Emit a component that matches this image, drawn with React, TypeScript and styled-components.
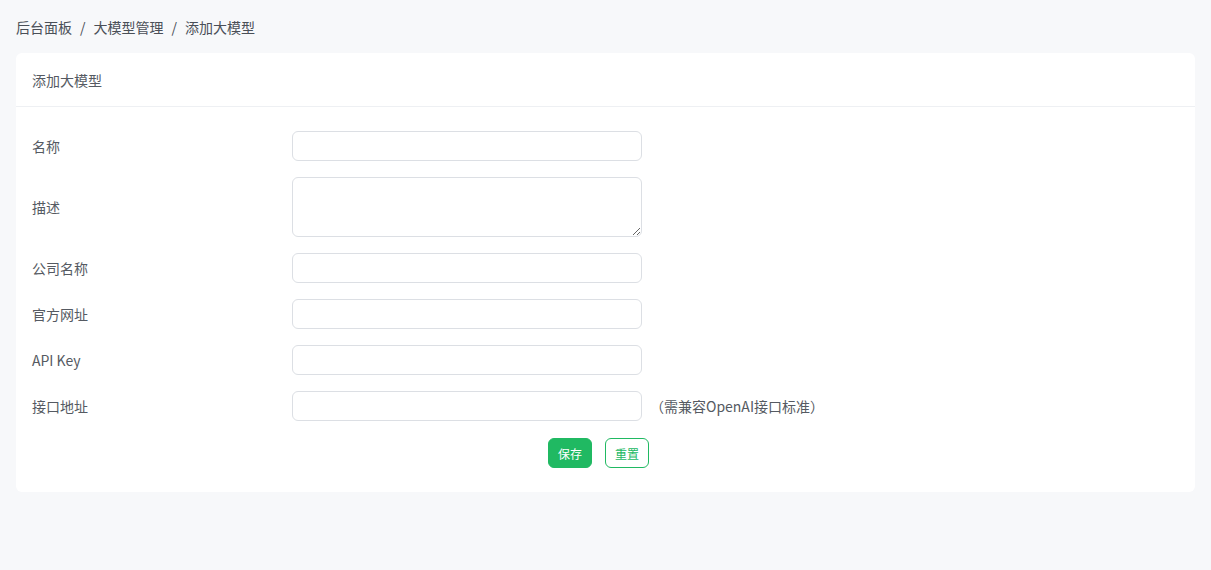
import styled, { createGlobalStyle } from 'styled-components';

const Global = createGlobalStyle`
  html, body { margin: 0; background: #f7f8fa; }
  body { font-family: "Noto Sans CJK SC", "Liberation Sans", sans-serif; color: #4a4f57; }
  * { box-sizing: border-box; }
`;

const Page = styled.div`
  padding: 16px 16px 0;
`;

const Crumbs = styled.div`
  display: flex;
  gap: 8px;
  font-size: 14px;
  color: #4a4f57;
  height: 22px;
  line-height: 22px;
  margin-bottom: 15px;
`;

const Card = styled.div`
  background: #fff;
  border-radius: 6px;
`;

const CardHead = styled.div`
  height: 54px;
  padding: 0 16px;
  display: flex;
  align-items: center;
  font-size: 14px;
  color: #555a62;
  border-bottom: 1px solid #eef0f3;
`;

const Form = styled.div`
  padding: 24px 16px 24px;
  display: flex;
  flex-direction: column;
  gap: 16px;
`;

const Row = styled.div`
  display: flex;
  align-items: center;
`;

const Label = styled.div`
  width: 260px;
  font-size: 14px;
  color: #555a62;
`;

const Input = styled.input`
  width: 350px;
  height: 30px;
  border: 1px solid #dcdfe4;
  border-radius: 6px;
  outline: none;
`;

const Area = styled.textarea`
  width: 350px;
  height: 60px;
  border: 1px solid #dcdfe4;
  border-radius: 6px;
  outline: none;
`;

const Hint = styled.span`
  margin-left: 8px;
  font-size: 14px;
  color: #555a62;
`;

const Actions = styled.div`
  display: flex;
  gap: 13px;
  padding-left: 516px;
  margin-top: 1px;
`;

const Btn = styled.button<{ $solid?: boolean }>`
  height: 30px;
  padding: 0 9px;
  font-size: 12px;
  font-family: inherit;
  border-radius: 6px;
  border: 1px solid #20b962;
  background: ${(p) => (p.$solid ? '#20b962' : '#fff')};
  color: ${(p) => (p.$solid ? '#fff' : '#20b962')};
`;

const fields = ['名称', '描述', '公司名称', '官方网址', 'API Key', '接口地址'];

export default function App() {
  return (
    <Page>
      <Global />
      <Crumbs>
        <span>后台面板</span><span>/</span><span>大模型管理</span><span>/</span><span>添加大模型</span>
      </Crumbs>
      <Card>
        <CardHead>添加大模型</CardHead>
        <Form>
          {fields.map((f) => (
            <Row key={f}>
              <Label>{f}</Label>
              {f === '描述' ? <Area /> : <Input />}
              {f === '接口地址' && <Hint>（需兼容OpenAI接口标准）</Hint>}
            </Row>
          ))}
          <Actions>
            <Btn $solid>保存</Btn>
            <Btn>重置</Btn>
          </Actions>
        </Form>
      </Card>
    </Page>
  );
}
